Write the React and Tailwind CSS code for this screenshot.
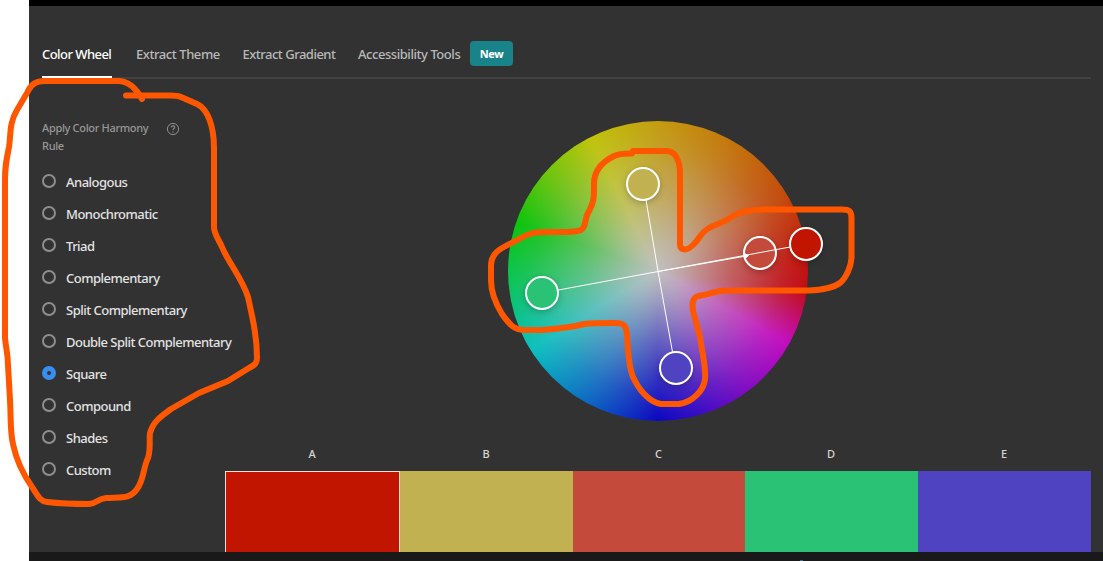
const tabs = [
  { label: 'Color Wheel', cls: 'w-[94px] text-white tracking-[-0.55px] font-medium' },
  { label: 'Extract Theme', cls: 'w-[106.5px] text-[#b9b9b9] tracking-[-0.43px] font-medium' },
  { label: 'Extract Gradient', cls: 'w-[115.5px] text-[#b9b9b9] tracking-[-0.5px] font-medium' },
  { label: 'Accessibility Tools', cls: 'w-[112px] text-[#b9b9b9] tracking-[-0.45px] font-medium' },
];

const rules = [
  'Analogous',
  'Monochromatic',
  'Triad',
  'Complementary',
  'Split Complementary',
  'Double Split Complementary',
  'Square',
  'Compound',
  'Shades',
  'Custom',
];

const swatches = [
  { name: 'A', cls: 'bg-[#c21500] border border-b-0 border-[#f3dcd6] w-[175px]' },
  { name: 'B', cls: 'bg-[#c1b150] w-[173px]' },
  { name: 'C', cls: 'bg-[#c44a3c] w-[172px]' },
  { name: 'D', cls: 'bg-[#2ac275] w-[173px]' },
  { name: 'E', cls: 'bg-[#4f43c2] w-[173px]' },
];

const markers = [
  { x: 298, y: 123, fill: '#c21500' },
  { x: 135, y: 63, fill: '#c1b150' },
  { x: 252, y: 132, fill: '#c44a3c' },
  { x: 34, y: 172, fill: '#2ac275' },
  { x: 168, y: 247, fill: '#4f43c2' },
];

function Tabs() {
  return (
    <nav className="mr-3 ml-[13px] flex h-[73px] border-b-2 border-[#414141] text-[13px] leading-[20px]">
      {tabs.map((t, i) => (
        <div key={t.label} className={`relative shrink-0 pt-[38px] whitespace-nowrap ${t.cls}`}>
          {t.label}
          {i === 0 && <span className="absolute -bottom-px left-0 h-[2px] w-[70px] bg-white" />}
        </div>
      ))}
      <span className="mt-[35px] h-[25px] w-[43px] rounded-[4px] bg-[#188489] text-center text-[11px] leading-[26px] font-bold tracking-[-0.4px] text-white">
        New
      </span>
    </nav>
  );
}

function HarmonyRules() {
  return (
    <aside className="w-[196px] shrink-0 pl-[13px]">
      <div className="flex h-[87px] items-start pt-[40px]">
        <p className="w-[124px] text-[11px] leading-[18px] font-medium tracking-[-0.32px] text-[#979797]">
          Apply Color Harmony Rule
        </p>
        <svg className="mt-[3px]" width="14" height="14" viewBox="0 0 14 14" fill="none" stroke="#8e8e8e">
          <circle cx="7" cy="7" r="5.6" />
          <path d="M5.300 5.400c.1-2 3.400-2 3.400 0C8.700 6.600 7 6.500 7 8.100M7 9.200v1.200" strokeWidth="1.100" />
        </svg>
      </div>
      <ul>
        {rules.map((r) => (
          <li key={r} className="flex h-8 items-center gap-[10px]">
            <span
              className={
                r === 'Square'
                  ? 'mb-[2px] size-[14px] shrink-0 rounded-full border-[5px] border-[#378ef0] bg-[#323232]'
                  : 'mb-[2px] size-[14px] shrink-0 rounded-full border-2 border-[#8e8e8e]'
              }
            />
            <span className="text-[13px] leading-5 font-medium tracking-[-0.52px] whitespace-nowrap text-[#e3e3e3]">{r}</span>
          </li>
        ))}
      </ul>
    </aside>
  );
}

function Wheel() {
  return (
    <div className="relative mt-[42px] ml-[283px] size-[300px] rounded-full bg-[conic-gradient(#c49c10_0deg,#c4780c_28deg,#c4480c_60deg,#c2140c_85deg,#c20c18_98deg,#c40cc0_119deg,#7c0cc4_145deg,#3c0cc4_163deg,#0c08c0_180deg,#0c68c4_208deg,#0cc0c0_238deg,#0cc45c_265deg,#0cc40c_289deg,#70c40c_312deg,#c0c40c_333deg,#c49c10_360deg)]">
      <div className="size-full rounded-full bg-[radial-gradient(circle,#c0c0c0_0%,rgba(192,192,192,0.83)_12%,rgba(192,192,192,0.45)_35%,rgba(192,192,192,0.12)_58%,rgba(192,192,192,0)_70%)]" />
      <svg
        className="absolute top-0 left-0 overflow-visible"
        width="300"
        height="300"
        viewBox="0 0 300 300"
        fill="none"
        stroke="#fff"
      >
        {markers.map((m) => (
          <circle
            key={m.fill}
            className="drop-shadow-[0_2px_3px_rgba(0,0,0,0.22)]"
            cx={m.x}
            cy={m.y}
            r="16"
            fill={m.fill}
            strokeWidth="2"
          />
        ))}
        <path d="M50.500 169L150 150.500L282 126M138 79L150 150L164.500 231" strokeWidth="1" />
        <path d="M150 150.500L238 135" strokeWidth="1.200" />
        <path d="M235.500 132L240.500 134.500L236.500 138Z" fill="#fff" />
      </svg>
    </div>
  );
}

function Palette() {
  return (
    <div className="mt-[23px] flex">
      {swatches.map((s) => (
        <div key={s.name}>
          <div className="h-[27px] pr-px text-center text-[11px] leading-[20px] font-medium text-[#d6d6d6]">{s.name}</div>
          <div className={`h-[81px] ${s.cls}`} />
        </div>
      ))}
    </div>
  );
}

function Annotations() {
  return (
    <svg
      className="pointer-events-none absolute top-0 left-0"
      width="1103"
      height="561"
      viewBox="0 0 1103 561"
      fill="none"
      stroke="#ff5700"
      strokeWidth="6"
      strokeLinecap="round"
      strokeLinejoin="round"
    >
      <path d="M142 99C137 90 130 81 118 81H45C36 81 31 84 27 93L17 110C9 123 11 135 9 147C6 162 5 166 5 180V338C6 349 8 354 8 365L10 400C11 416 10 432 13 444C16 459 23 474 32 487C37 494 39 501 47 502C64 504 76 504 89 504C98 503 97 499 106 498C122 497 130 499 137 489C144 480 143 468 148 458C151 448 149 441 150 433C153 422 160 417 171 409L199 393L228 381L249 368C255 365 257 363 257 358C257 337 253 320 248 297C242 278 228 262 222 247C218 238 214 234 214 227V148C214 127 208 109 197 104L181 97C177 95 173 95.500 166 95.500H126" />
      <path d="M633 151H668C676 152 680 162 680 173V244C680 251 687 251 693 245C699 240 700 233 709 228C719 223 727 221 733 216C742 211 750 209.500 764 209.500H842C849 209.500 851.500 211 851.500 218V258C851 267 846 278 840 283C833 288 821 290 809 290.500H725C716 291 706 295 698 296C692 298 692 304 693 311L700 337C702 353 706 365 705 379C704 390 693 402 679 404H661C649 402 639 390 633 377C628 365 628 349 627 334C626 325 623 323 615 323C602 323 594 323 584 324C569 328 556 329 542 330H524C514 330 509 324 502 314C494 301 491 291 491 280V266C491 250 505 247 519 239C530 232 538 232 549 232C562 232 575 233 581 230C587 226 584 219 588 213C594 202 594 198 594 186C593 171 602 162 614 156C621 153 626 153.500 632 153.500" />
    </svg>
  );
}

export default function App() {
  return (
    <div className="relative h-[561px] w-[1103px] overflow-hidden bg-white pl-[29px] font-['Noto_Sans','Open_Sans',sans-serif]">
      <div className="h-[6px] bg-black" />
      <main className="h-[546px] bg-[#323232]">
        <Tabs />
        <div className="flex h-[473px]">
          <HarmonyRules />
          <section>
            <Wheel />
            <Palette />
          </section>
        </div>
      </main>
      <div className="flex h-[9px] justify-center bg-[#191919] pl-[470px]">
        <span className="mt-[8px] h-px w-[3px] bg-[#426989]" />
      </div>
      <Annotations />
    </div>
  );
}
